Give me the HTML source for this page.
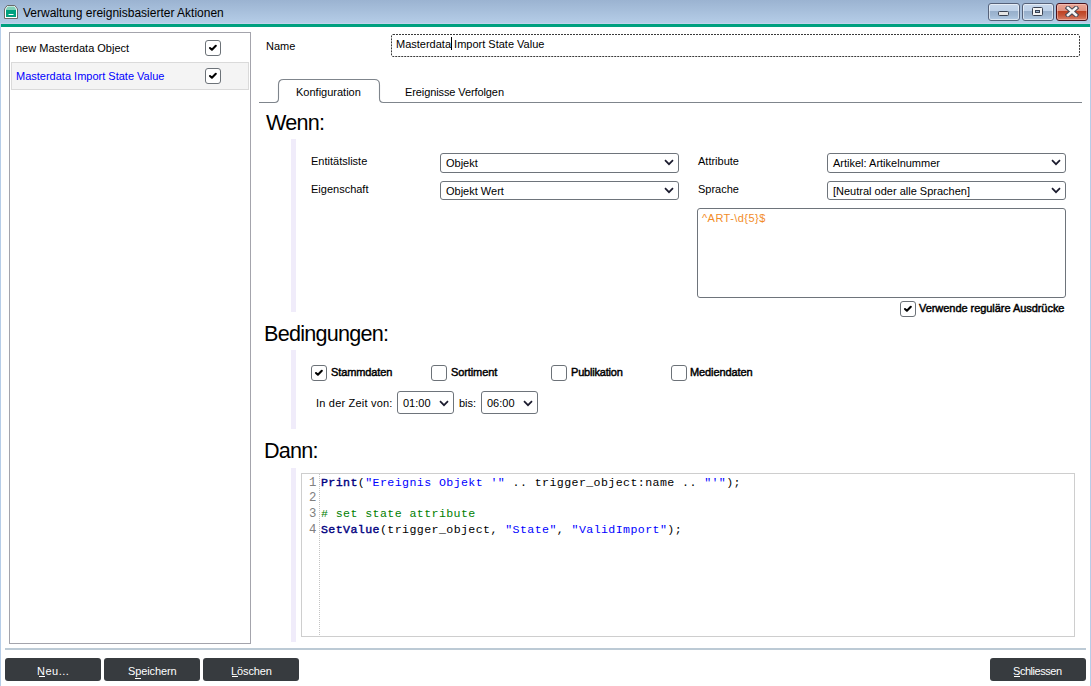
<!DOCTYPE html>
<html><head><meta charset="utf-8">
<style>
html,body{margin:0;padding:0;}
body{width:1091px;height:686px;overflow:hidden;position:relative;background:#fff;font-family:"Liberation Sans",sans-serif;font-size:11px;color:#000;}
.a{position:absolute;}
.t{position:absolute;white-space:nowrap;line-height:14px;height:14px;}
.b{font-weight:normal;-webkit-text-stroke:0.45px #000;letter-spacing:-0.1px !important;}
#title{left:0;top:0;width:1091px;height:24px;background:linear-gradient(#9bb3d1,#b6cee8);}
#green{left:1px;top:24px;width:1089px;height:3px;background:#00a07f;}
#fl{left:0;top:24px;width:1px;height:662px;background:#b6cde8;}
#fr{left:1090px;top:24px;width:1px;height:662px;background:#b6cde8;}
.wb{position:absolute;top:3px;height:18px;width:32px;box-sizing:border-box;border:1px solid #56627a;border-radius:3px;box-shadow:inset 0 0 0 1px rgba(255,255,255,0.55);background:linear-gradient(#c6d7ec 0%,#bed1e8 44%,#97afcb 45%,#9fb7d2 70%,#b3cbe5 100%);}
.wb.close{border-color:#4a121c;box-shadow:inset 0 0 0 1px rgba(255,210,200,0.5);background:linear-gradient(#eaa697 0%,#e0907e 44%,#bd4122 45%,#c65538 70%,#d9806a 100%);}
.list{left:9px;top:32px;width:242px;height:612px;box-sizing:border-box;border:1px solid #a4a4ac;}
.sel{left:11px;top:62px;width:238px;height:28px;box-sizing:border-box;border:1px solid #dadada;background:#f4f4f4;}
.cb{position:absolute;width:16px;height:16px;box-sizing:border-box;border:1px solid #6c7278;border-radius:3px;background:#fff;}
.cb svg{position:absolute;left:2px;top:2px;}
.sb{position:absolute;box-sizing:border-box;border:1px solid #6e747b;border-radius:3px;background:#fff;}
.sb svg{position:absolute;}
.lav{position:absolute;left:291px;width:5px;background:#f0ecfa;}
.h{position:absolute;font-size:21.6px;letter-spacing:-0.75px;line-height:24px;height:24px;white-space:nowrap;}
.btn{position:absolute;top:658px;height:23px;width:96px;background:#373b3f;border-radius:3px;color:#fff;}
.code{left:301px;top:473px;width:774px;height:164px;box-sizing:border-box;border:1px solid #cecece;}
.m{position:absolute;white-space:pre;line-height:14px;height:14px;}
.mono{font-family:"Liberation Mono",monospace;font-size:11.6px;letter-spacing:0.41px;}
.m.mono:not(.code1){left:309px;color:#808080;font-size:12.3px;letter-spacing:0;}
.code1{left:321px;color:#000;}
.kw{color:#000080;font-weight:normal;-webkit-text-stroke:0.4px #000080;}
.st{color:#0000ff;}
.cm{color:#008000;}
</style></head><body>
<div id="title" class="a"></div>
<div class="a" style="left:0;top:23px;width:1091px;height:1px;background:#c3d3ec"></div>
<div id="green" class="a"></div>
<div id="fl" class="a"></div>
<div id="fr" class="a"></div>
<!-- title icon -->
<svg class="a" style="left:4px;top:5px" width="14" height="14" viewBox="0 0 14 14">
<path d="M3.2 0.5 H10.8 L13.5 4 V13.5 H0.5 V4 Z" fill="#fff" stroke="#6a6a6a" stroke-width="1"/>
<path d="M3.7 1.5 H10.3 L12.6 5 H1.4 Z" fill="#80d0b8"/>
<rect x="2" y="5" width="10" height="7" fill="#00a07f"/>
<rect x="4.5" y="9" width="5" height="1" fill="#fff"/>
</svg>
<div class="t" style="left:23px;top:6px;font-size:12px;color:#000">Verwaltung ereignisbasierter Aktionen</div>
<div class="wb" style="left:988px"><div class="a" style="left:9px;top:7px;width:11px;height:5px;box-sizing:border-box;border:1px solid #3a4252;border-radius:1.5px;background:#e6e6e6"></div></div>
<div class="wb" style="left:1022px"><div class="a" style="left:9px;top:3px;width:11px;height:9px;box-sizing:border-box;border:1px solid #3a4252;border-radius:1.5px;background:#f4f4f4"><div class="a" style="left:2px;top:2px;width:5px;height:3px;box-sizing:border-box;border:1px solid #3a4252;background:#9ab2cc"></div></div></div>
<div class="wb close" style="left:1056px"><svg class="a" style="left:8px;top:2px" width="14" height="11" viewBox="0 0 14 11"><path d="M3 2 L11 9 M11 2 L3 9" stroke="#4a4a55" stroke-width="4.6" stroke-linecap="square"/><path d="M3 2 L11 9 M11 2 L3 9" stroke="#f6f6f6" stroke-width="2.6" stroke-linecap="square"/></svg></div>
<!-- left list -->
<div class="a list"></div>
<div class="a sel"></div>
<div class="t" style="left:16px;top:41px;letter-spacing:0px">new Masterdata Object</div>
<div class="t" style="left:16px;top:69px;letter-spacing:0px;color:#0000ff">Masterdata Import State Value</div>
<div class="cb" style="left:205px;top:40px"><svg width="11" height="9" viewBox="0 0 11 9"><path d="M2.0 5.0 L3.9 6.7 L7.8 2.8" fill="none" stroke="#000" stroke-width="2.1" stroke-linecap="round" stroke-linejoin="round"/></svg></div>
<div class="cb" style="left:205px;top:68px"><svg width="11" height="9" viewBox="0 0 11 9"><path d="M2.0 5.0 L3.9 6.7 L7.8 2.8" fill="none" stroke="#000" stroke-width="2.1" stroke-linecap="round" stroke-linejoin="round"/></svg></div>

<!-- name -->
<div class="t" style="left:266px;top:39px;letter-spacing:0px">Name</div>
<svg class="a" style="left:391px;top:34px" width="689" height="23"><rect x="0.5" y="0.5" width="688" height="22" rx="1.5" fill="none" stroke="#3a3a3a" stroke-width="1" stroke-dasharray="2 1"/></svg>
<div class="a" style="left:451px;top:37px;width:1px;height:13px;background:#000"></div>
<div class="t" style="left:396px;top:37px;letter-spacing:0px">Masterdata Import State Value</div>

<!-- tabs -->
<svg class="a" style="left:255px;top:75px" width="830" height="30" viewBox="0 0 830 30">
<path d="M4 27.5 H19.5 Q23.5 27.5 23.5 23.5 V9.5 Q23.5 4.5 28.5 4.5 H119.5 Q124.5 4.5 124.5 9.5 V23.5 Q124.5 27.5 128.5 27.5 H827" fill="none" stroke="#7f858c" stroke-width="1.1"/>
</svg>
<div class="t" style="left:296px;top:85px;letter-spacing:0px">Konfiguration</div>
<div class="t" style="left:405px;top:85px;letter-spacing:-0.1px">Ereignisse Verfolgen</div>

<!-- Wenn -->
<div class="h" style="left:266px;top:111px">Wenn:</div>
<div class="lav" style="top:139px;height:173px"></div>
<div class="t" style="left:311px;top:154px;letter-spacing:0px">Entitätsliste</div>
<div class="t" style="left:311px;top:182px;letter-spacing:0px">Eigenschaft</div>
<div class="sb" style="left:440px;top:153px;width:239px;height:20px"></div>
<div class="t" style="left:446px;top:156px;letter-spacing:0px">Objekt</div>
<div class="sb" style="left:440px;top:181px;width:239px;height:19px"></div>
<div class="t" style="left:446px;top:184px;letter-spacing:0px">Objekt Wert</div>
<div class="t" style="left:698px;top:154px;letter-spacing:0px">Attribute</div>
<div class="t" style="left:698px;top:182px;letter-spacing:0px">Sprache</div>
<div class="sb" style="left:827px;top:153px;width:239px;height:20px"></div>
<div class="t" style="left:833px;top:156px;letter-spacing:0px">Artikel: Artikelnummer</div>
<div class="sb" style="left:827px;top:181px;width:239px;height:19px"></div>
<div class="t" style="left:833px;top:184px;letter-spacing:0px">[Neutral oder alle Sprachen]</div>
<div class="sb" style="left:697px;top:208px;width:369px;height:90px"></div>
<div class="t" style="left:702px;top:211px;letter-spacing:0.45px;color:#f28c28">^ART-\d{5}$</div>
<div class="cb" style="left:900px;top:301px"><svg width="11" height="9" viewBox="0 0 11 9"><path d="M2.0 5.0 L3.9 6.7 L7.8 2.8" fill="none" stroke="#000" stroke-width="2.1" stroke-linecap="round" stroke-linejoin="round"/></svg></div>
<div class="t b" style="left:919px;top:301px;letter-spacing:-0.05px !important">Verwende reguläre Ausdrücke</div>

<!-- Bedingungen -->
<div class="h" style="left:264px;top:322px">Bedingungen:</div>
<div class="lav" style="top:350px;height:79px"></div>
<div class="cb" style="left:311px;top:365px"><svg width="11" height="9" viewBox="0 0 11 9"><path d="M2.0 5.0 L3.9 6.7 L7.8 2.8" fill="none" stroke="#000" stroke-width="2.1" stroke-linecap="round" stroke-linejoin="round"/></svg></div>
<div class="t b" style="left:331px;top:365px;letter-spacing:-0.8px">Stammdaten</div>
<div class="cb" style="left:431px;top:365px"></div>
<div class="t b" style="left:451px;top:365px;letter-spacing:-0.8px">Sortiment</div>
<div class="cb" style="left:551px;top:365px"></div>
<div class="t b" style="left:571px;top:365px;letter-spacing:-0.2px !important">Publikation</div>
<div class="cb" style="left:671px;top:365px"></div>
<div class="t b" style="left:690px;top:365px;letter-spacing:-0.8px">Mediendaten</div>
<div class="t" style="left:316px;top:396px;letter-spacing:0.2px">In der Zeit von:</div>
<div class="sb" style="left:397px;top:391px;width:57px;height:23px"></div>
<div class="t" style="left:403px;top:396px;letter-spacing:0px">01:00</div>
<div class="t" style="left:459px;top:396px;letter-spacing:0px">bis:</div>
<div class="sb" style="left:481px;top:391px;width:57px;height:23px"></div>
<div class="t" style="left:487px;top:396px;letter-spacing:0px">06:00</div>

<svg class="a" style="left:664px;top:159px" width="10" height="7" viewBox="0 0 10 7"><path d="M1 1.2 L5 5.2 L9 1.2" fill="none" stroke="#1b1b2e" stroke-width="1.7"/></svg><svg class="a" style="left:664px;top:187px" width="10" height="7" viewBox="0 0 10 7"><path d="M1 1.2 L5 5.2 L9 1.2" fill="none" stroke="#1b1b2e" stroke-width="1.7"/></svg><svg class="a" style="left:1051px;top:159px" width="10" height="7" viewBox="0 0 10 7"><path d="M1 1.2 L5 5.2 L9 1.2" fill="none" stroke="#1b1b2e" stroke-width="1.7"/></svg><svg class="a" style="left:1051px;top:187px" width="10" height="7" viewBox="0 0 10 7"><path d="M1 1.2 L5 5.2 L9 1.2" fill="none" stroke="#1b1b2e" stroke-width="1.7"/></svg><svg class="a" style="left:439px;top:400px" width="10" height="7" viewBox="0 0 10 7"><path d="M1 1.2 L5 5.2 L9 1.2" fill="none" stroke="#1b1b2e" stroke-width="1.7"/></svg><svg class="a" style="left:523px;top:400px" width="10" height="7" viewBox="0 0 10 7"><path d="M1 1.2 L5 5.2 L9 1.2" fill="none" stroke="#1b1b2e" stroke-width="1.7"/></svg>
<!-- Dann -->
<div class="h" style="left:264px;top:439px">Dann:</div>
<div class="lav" style="top:468px;height:174px"></div>
<div class="a code"></div>
<div class="a" style="left:319px;top:474px;width:0;height:161px;border-left:1px dotted #c4c4c4"></div>
<div class="m mono" style="top:476px">1</div>
<div class="m mono" style="top:491px">2</div>
<div class="m mono" style="top:507px">3</div>
<div class="m mono" style="top:523px">4</div>
<div class="m mono code1" style="top:476px"><span class="kw">Print</span>(<span class="st">"Ereignis Objekt '"</span> .. trigger_object:name .. <span class="st">"'"</span>);</div>
<div class="m mono code1" style="top:507px"><span class="cm"># set state attribute</span></div>
<div class="m mono code1" style="top:523px"><span class="kw">SetValue</span>(trigger_object, <span class="st">"State"</span>, <span class="st">"ValidImport"</span>);</div>


<!-- bottom -->
<div class="a" style="left:5px;top:648px;width:1081px;height:2px;background:#bccad5"></div>
<div class="btn" style="left:5px"></div>
<div class="btn" style="left:104px"></div>
<div class="btn" style="left:203px"></div>
<div class="btn" style="left:990px"></div>
<div class="t" style="left:37px;top:664px;color:#fff;letter-spacing:0.5px">Neu...</div>
<div class="t" style="left:128px;top:664px;color:#fff;letter-spacing:-0.1px">Speichern</div>
<div class="t" style="left:231px;top:664px;color:#fff;letter-spacing:-0.1px">Löschen</div>
<div class="t" style="left:1013px;top:664px;color:#fff;letter-spacing:-0.45px">Schliessen</div>
<div class="a" style="left:39px;top:676px;width:6px;height:1px;background:#fff"></div>
<div class="a" style="left:135px;top:678px;width:6px;height:1px;background:#fff"></div>
<div class="a" style="left:232px;top:676px;width:6px;height:1px;background:#fff"></div>
<div class="a" style="left:1014px;top:676px;width:6px;height:1px;background:#fff"></div>
</body></html>
